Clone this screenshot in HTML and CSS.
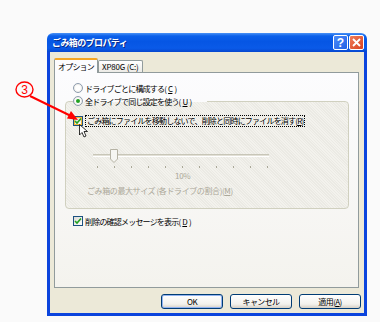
FILE: index.html
```html
<!DOCTYPE html>
<html lang="ja">
<head>
    <meta charset="UTF-8">
    <meta name="viewport" content="width=device-width, initial-scale=1.0">
    <title>ごみ箱のプロパティ</title>
    <link rel="stylesheet" href="styles.css">
</head>
<body>
    <div class="window">
        <div class="titlebar">
            <span class="title">ごみ箱のプロパティ</span>
            <div class="caption-buttons">
                <span class="cap-btn help">?</span>
                <span class="cap-btn close">
                    <svg width="9" height="9" viewBox="0 0 9 9"><path d="M1 1 L8 8 M8 1 L1 8" stroke="#fff" stroke-width="1.8"/></svg>
                </span>
            </div>
        </div>

        <div class="frame">
            <div class="tabs">
                <span class="tab active">オプション</span>
                <span class="tab latin">XP80G (C:)</span>
            </div>

            <div class="panel">
                <label class="option first"><span class="radio"></span>ドライブごとに構成する(<u>C</u>)</label>

                <fieldset class="group">
                    <legend><label class="option"><span class="radio checked"></span>全ドライブで同じ設定を使う(<u>U</u>)</label></legend>

                    <label class="option">
                        <span class="checkbox hot">
                            <svg width="8" height="8" viewBox="0 0 8 8"><path d="M1 4 L3 6 L7 1.5" fill="none" stroke="#21a121" stroke-width="1.6"/></svg>
                        </span>
                        <span class="focus">ごみ箱にファイルを移動しないで、削除と同時にファイルを消す(<u>R</u>)</span>
                    </label>

                    <div class="slider">
                        <div class="track"></div>
                        <svg class="thumb" width="8" height="14" viewBox="0 0 8 14"><path d="M0.5 0.5 H7.5 V10 L4 13.5 L0.5 10 Z" fill="#f6f6f2" stroke="#b5b2a4"/></svg>
                    </div>
                    <div class="ticks">
                        <span></span><span></span><span></span><span></span><span></span><span></span>
                        <span></span><span></span><span></span><span></span><span></span>
                    </div>
                    <div class="percent">10%</div>
                    <div class="caption">ごみ箱の最大サイズ&nbsp;(各ドライブの割合)(<u>M</u>)</div>
                </fieldset>

                <label class="option first">
                    <span class="checkbox">
                        <svg width="8" height="8" viewBox="0 0 8 8"><path d="M1 4 L3 6 L7 1.5" fill="none" stroke="#21a121" stroke-width="1.6"/></svg>
                    </span>
                    削除の確認メッセージを表示(<u>D</u>)
                </label>
            </div>

            <div class="buttons">
                <button class="default">OK</button>
                <button>キャンセル</button>
                <button>適用(<u>A</u>)</button>
            </div>
        </div>
    </div>

    <!-- annotation drawn over the screenshot -->
    <svg class="annotation" width="380" height="322" viewBox="0 0 380 322">
        <ellipse cx="24.5" cy="89.5" rx="8.5" ry="7.5" fill="none" stroke="#f00" stroke-width="1.4"/>
        <text x="24.5" y="94" text-anchor="middle" class="num">3</text>
        <line x1="30" y1="96" x2="71" y2="116" stroke="#f00" stroke-width="2"/>
        <path d="M78 120 L67 118.5 L71 111 Z" fill="#f00"/>
        <path d="M79.5 124.5 V135 L82 132.5 L84 137 L86 136 L84 131.5 L87.5 131.5 Z" fill="#fff" stroke="#000" stroke-width="0.8"/>
    </svg>
</body>
</html>
```

FILE: styles.css
```css
body {
    margin: 0;
    width: 380px;
    height: 322px;
    background-color: #fafafa;
    font-family: "Noto Sans CJK JP", sans-serif;
    font-size: 8px;
    letter-spacing: -0.8px;
    color: #000;
    position: relative;
    overflow: hidden;
}
u {
    text-decoration: underline;
}
.window {
    margin: 33px 0 0 47px;
    width: 320px;
}
.titlebar {
    height: 19px;
    border-radius: 6px 6px 0 0;
    background: linear-gradient(#4a92f6 0, #0b60ea 3px, #0656e4 45%, #0a5ae8 80%, #0647cf 100%);
    display: flex;
    align-items: center;
    justify-content: space-between;
    padding: 0 3px 0 5px;
}
.title {
    color: #fff;
    font-weight: bold;
    font-size: 9px;
    letter-spacing: -0.6px;
    text-shadow: 1px 1px 0 #0a2a8a;
}
.caption-buttons {
    display: flex;
    gap: 1px;
}
.cap-btn {
    width: 15px;
    height: 15px;
    box-sizing: border-box;
    border: 1px solid #fff;
    border-radius: 2px;
    display: flex;
    align-items: center;
    justify-content: center;
    color: #fff;
    font-family: "Liberation Sans", sans-serif;
    font-weight: bold;
    font-size: 12px;
    letter-spacing: 0;
}
.help {
    background: linear-gradient(135deg, #4c8cf8, #2161e6);
}
.close {
    background: linear-gradient(135deg, #ef7d5b, #d8411f);
}
.frame {
    background-color: #ece9d8;
    border: 3px solid #0b44dd;
    border-top: none;
    padding: 7px 3px 4px 4px;
    height: 250px;
}
.tabs {
    display: flex;
    align-items: flex-end;
    height: 13px;
}
.tab {
    height: 11px;
    line-height: 11px;
    padding: 0 4px;
    border: 1px solid #919b9c;
    border-bottom: none;
    border-radius: 2px 2px 0 0;
    background: linear-gradient(#ffffff, #ecebe6);
}
.tab.latin {
    letter-spacing: -0.2px;
    padding: 0 3px;
}
.tab.active {
    height: 13px;
    line-height: 13px;
    padding: 0 3px;
    background: #fcfcfe;
    border-top: 2px solid #f5a623;
    position: relative;
    top: 1px;
}
.panel {
    height: 205px;
    border: 1px solid #919b9c;
    background: linear-gradient(#fcfcfe, #f4f3ee);
    padding: 9px 8px 0 10px;
    margin-right: 2px;
}
.option {
    display: flex;
    align-items: center;
    gap: 2px;
    height: 12px;
    white-space: nowrap;
}
.option.first {
    margin-left: 8px;
}
.radio {
    width: 8px;
    height: 8px;
    border: 1px solid #8e9cae;
    border-radius: 50%;
    background: radial-gradient(#ffffff 40%, #dcdbd4);
    display: flex;
    align-items: center;
    justify-content: center;
}
.radio.checked::after {
    content: "";
    width: 4px;
    height: 4px;
    border-radius: 50%;
    background: #21a121;
}
.checkbox {
    width: 8px;
    height: 8px;
    border: 1px solid #1c5180;
    background: linear-gradient(135deg, #dcdbd5, #ffffff);
    display: flex;
    align-items: center;
    justify-content: center;
}
.checkbox.hot {
    box-shadow: inset 0 0 0 1px #f8b636;
}
.focus {
    border: 1px dotted #000;
    padding: 0 1px;
    line-height: 10px;
}
.group {
    width: 284px;
    box-sizing: border-box;
    margin: 1px 0 0 0;
    padding: 8px 7px 12px 7px;
    border: 1px solid #d0d0bf;
    border-radius: 4px;
    background: repeating-linear-gradient(45deg, #f3f2ed 0, #f3f2ed 1px, #ebeae4 1px, #ebeae4 2px);
}
.group legend {
    padding: 0 16px 0 0;
}
.slider {
    position: relative;
    height: 14px;
    margin: 22px 0 0 20px;
    width: 176px;
}
.track {
    position: absolute;
    top: 5px;
    left: 0;
    right: 0;
    height: 1px;
    border-top: 1px solid #c8c6b8;
    border-bottom: 1px solid #ffffff;
    background: #e2e0d6;
}
.thumb {
    position: absolute;
    left: 17px;
    top: 0;
}
.ticks {
    display: flex;
    justify-content: space-between;
    width: 171px;
    margin: 3px 0 0 24px;
    height: 2px;
}
.ticks span {
    width: 1px;
    height: 2px;
    background: #a9a797;
}
.percent {
    margin: 3px 0 0 102px;
    height: 10px;
    line-height: 10px;
    color: #aca899;
    letter-spacing: -0.3px;
}
.caption {
    margin: 4px 0 0 14px;
    height: 11px;
    line-height: 11px;
    color: #aca899;
    white-space: nowrap;
    letter-spacing: -0.4px;
}
.group + .option {
    margin-top: 6px;
}
.buttons {
    display: flex;
    justify-content: flex-end;
    gap: 7px;
    margin-top: 6px;
}
button {
    width: 62px;
    height: 15px;
    padding: 0;
    font-family: "Noto Sans CJK JP", sans-serif;
    font-size: 8px;
    letter-spacing: -0.6px;
    color: #000;
    border: 1px solid #003c74;
    border-radius: 3px;
    background: linear-gradient(#ffffff, #f2f1ec 70%, #d6d0c5);
    line-height: 11px;
}
button.default {
    box-shadow: inset 0 0 0 1px #92b3f0;
}
.annotation {
    position: absolute;
    left: 0;
    top: 0;
    pointer-events: none;
}
.num {
    fill: #f00;
    font-family: "Liberation Sans", sans-serif;
    font-size: 12px;
    letter-spacing: 0;
}
```
